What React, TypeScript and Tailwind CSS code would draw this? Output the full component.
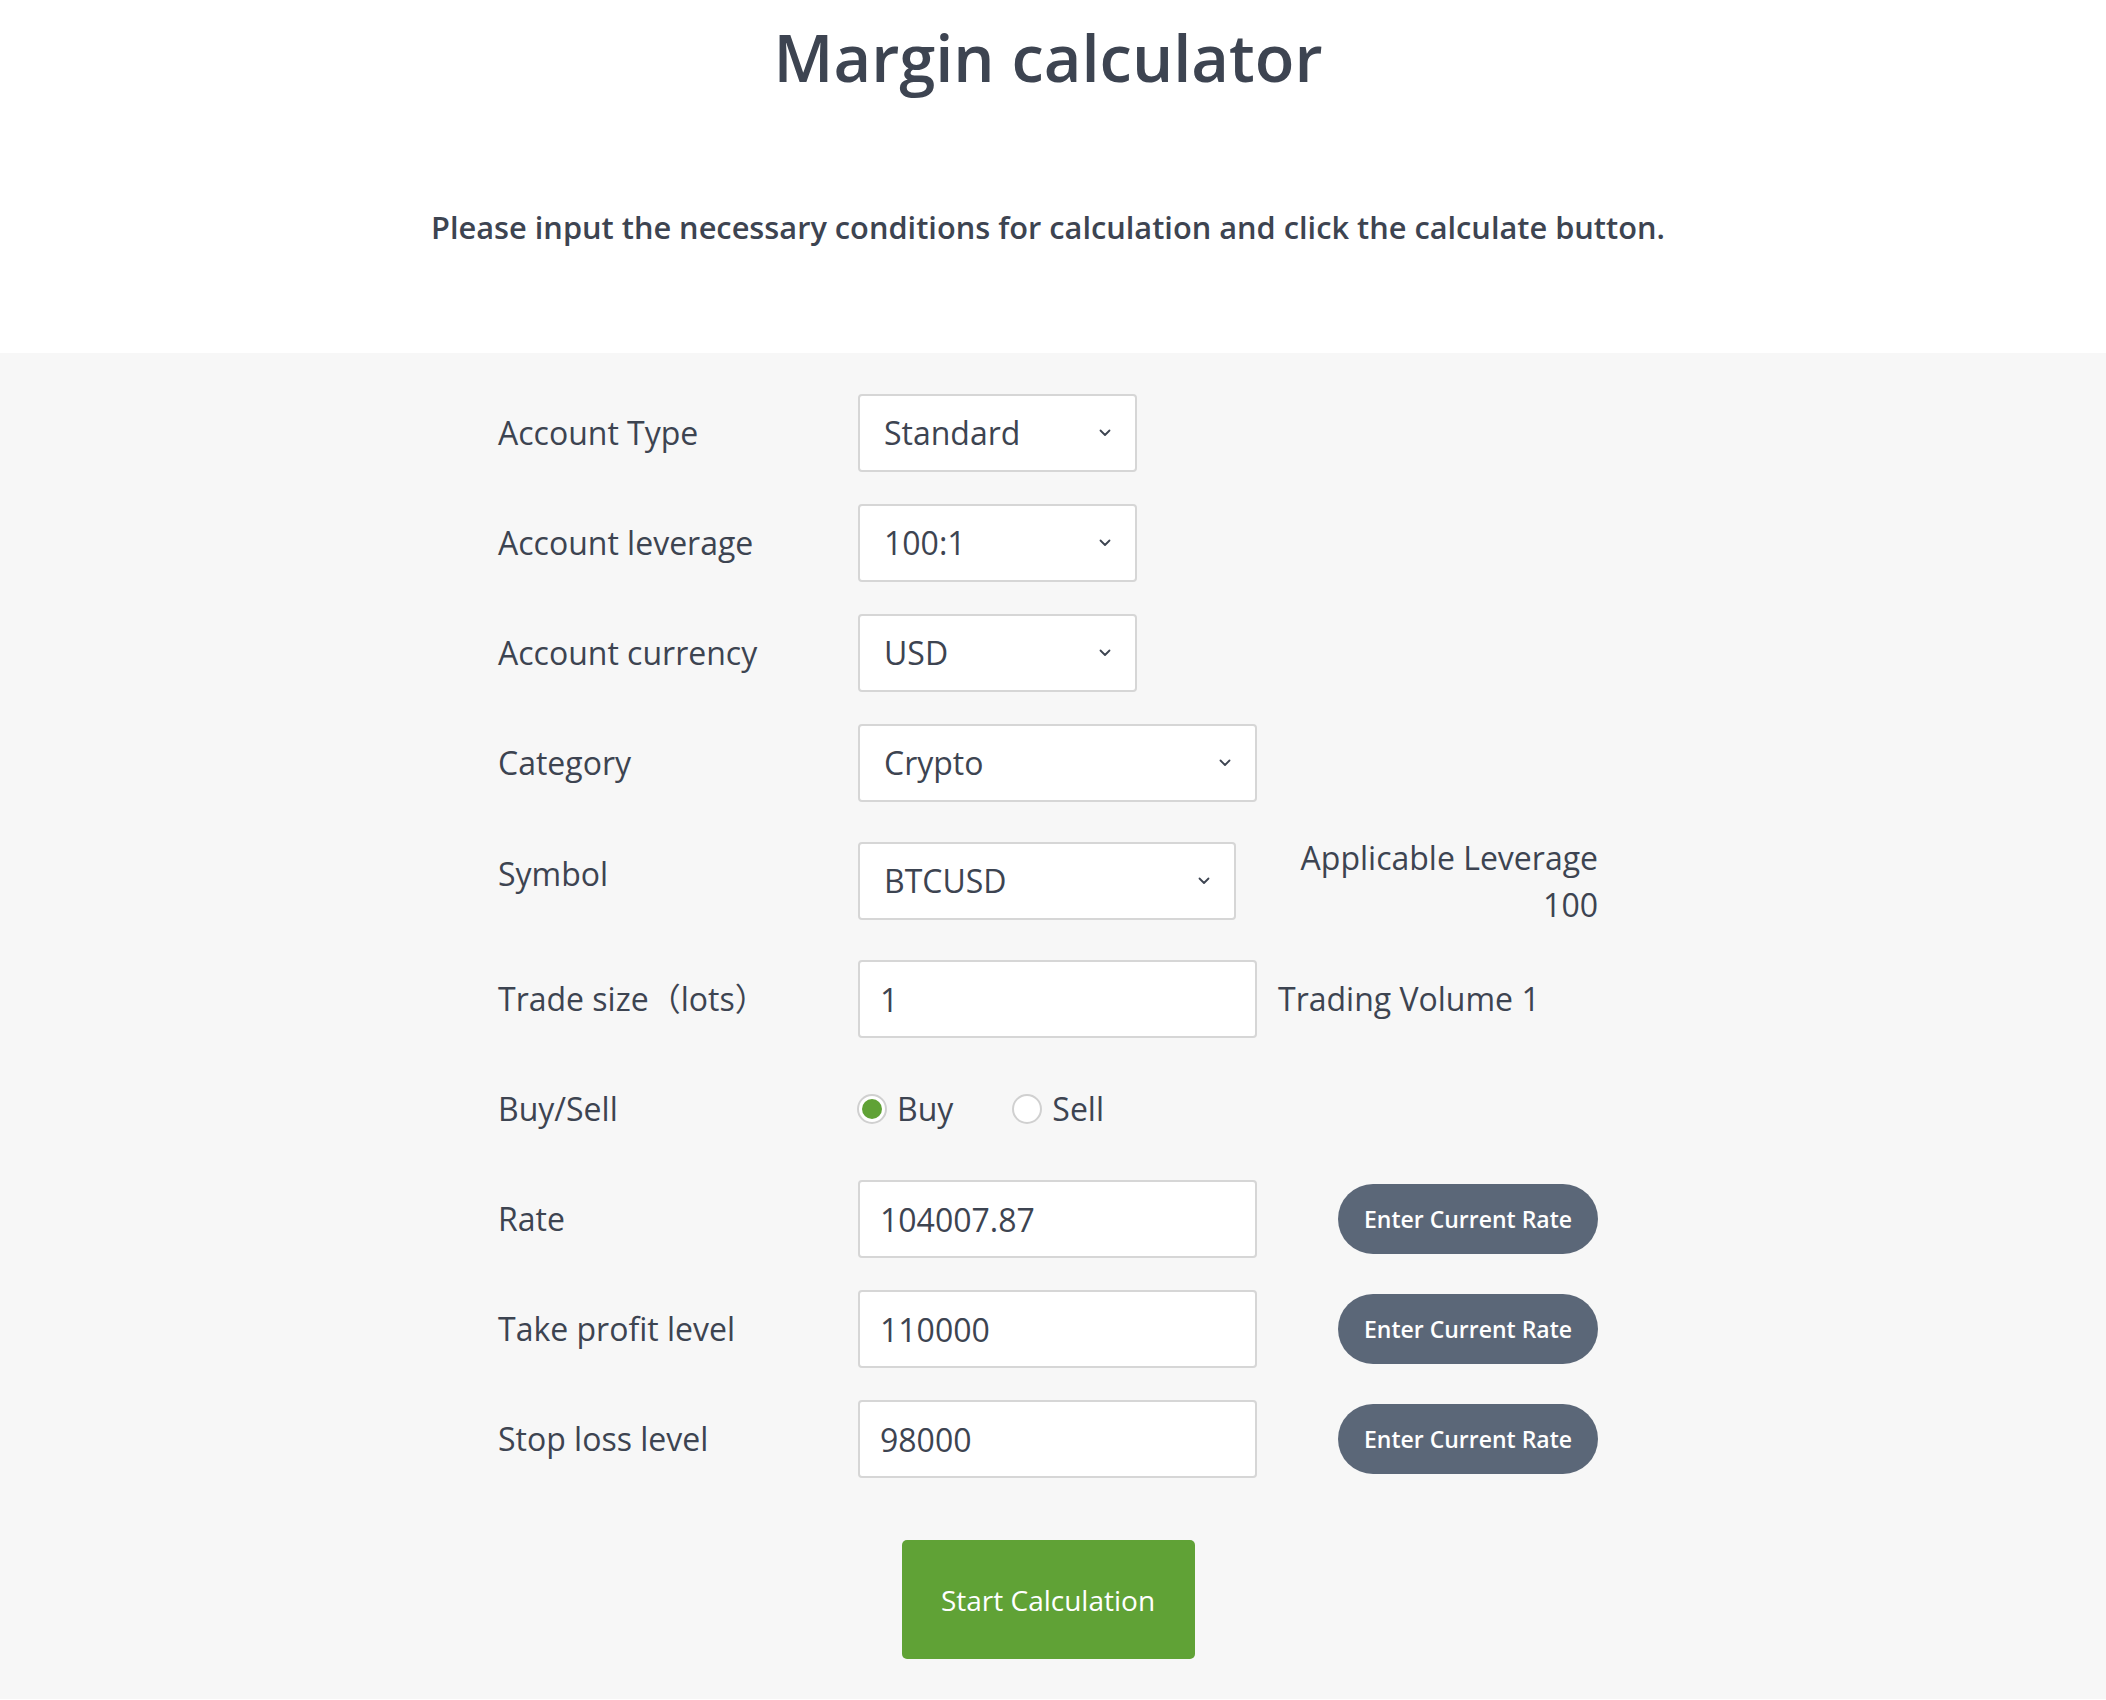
import type { ReactNode } from "react";

const FONT = "font-['Open_Sans','Noto_Sans_CJK_JP',sans-serif]";

function Chevron() {
    return (
        <svg width="12" height="8" viewBox="0 0 12 8" fill="none" className="shrink-0">
            <path d="M1.5 1.5L6 6L10.5 1.5" stroke="#3d4451" strokeWidth="1.8" strokeLinecap="round" strokeLinejoin="round" />
        </svg>
    );
}

function SelectBox({ value, width }: { value: string; width: string }) {
    return (
        <div
            className={`flex h-[78px] ${width} shrink-0 items-center justify-between rounded-[4px] border-2 border-[#d6d6d6] bg-white pl-[24px] pr-[24px]`}
        >
            <span>{value}</span>
            <Chevron />
        </div>
    );
}

function TextBox({ value }: { value: string }) {
    return (
        <input
            type="text"
            defaultValue={value}
            className="h-[78px] w-[399px] shrink-0 rounded-[4px] border-2 border-[#d6d6d6] bg-white pl-[20px] text-[#3d4451] outline-none"
        />
    );
}

function RateButton() {
    return (
        <div className="flex flex-1 justify-end">
            <button
                type="button"
                className="h-[70px] w-[260px] rounded-full bg-[#5b6778] text-[23px] font-semibold text-white"
            >
                Enter Current Rate
            </button>
        </div>
    );
}

function Row({ label, children, labelClass = "" }: { label: string; children: ReactNode; labelClass?: string }) {
    return (
        <div className="flex min-h-[78px] items-center">
            <div className={`w-[360px] shrink-0 ${labelClass}`}>{label}</div>
            {children}
        </div>
    );
}

function Radio({ label, checked }: { label: string; checked?: boolean }) {
    return (
        <label className="flex items-center gap-[10px]">
            <span className="flex h-[30px] w-[30px] items-center justify-center rounded-full border-2 border-[#d0d0d0] bg-white">
                {checked && <span className="h-[20px] w-[20px] rounded-full bg-[#60a236]" />}
            </span>
            <span>{label}</span>
        </label>
    );
}

export default function App() {
    return (
        <div className={`min-h-[1700px] bg-white text-[#3d4451] ${FONT}`}>
            <header className="pr-[10px] pt-[25px] pb-[106px] text-center">
                <h1 className="text-[65px] font-semibold leading-none">Margin calculator</h1>
                <p className="mt-[117px] text-[30.75px] font-semibold leading-[40px]">
                    Please input the necessary conditions for calculation and click the calculate button.
                </p>
            </header>

            <section className="min-h-[1346px] bg-[#f7f7f7] pr-[10px] pt-[41px]">
                <div className="mx-auto w-[1100px] text-[32px]">
                    <div className="flex flex-col gap-[32px]">
                        <Row label="Account Type">
                            <SelectBox value="Standard" width="w-[279px]" />
                        </Row>
                        <Row label="Account leverage">
                            <SelectBox value="100:1" width="w-[279px]" />
                        </Row>
                        <Row label="Account currency">
                            <SelectBox value="USD" width="w-[279px]" />
                        </Row>
                        <Row label="Category">
                            <SelectBox value="Crypto" width="w-[399px]" />
                        </Row>
                        <Row label="Symbol" labelClass="pb-[14px]">
                            <SelectBox value="BTCUSD" width="w-[378px]" />
                            <div className="flex-1 text-right leading-[47px]">
                                <div>Applicable Leverage</div>
                                <div>100</div>
                            </div>
                        </Row>
                        <Row label="Trade size（lots）">
                            <TextBox value="1" />
                            <span className="ml-[21px]">Trading Volume 1</span>
                        </Row>
                        <Row label="Buy/Sell">
                            <div className="-ml-px flex items-center gap-[59px]">
                                <Radio label="Buy" checked />
                                <Radio label="Sell" />
                            </div>
                        </Row>
                        <Row label="Rate">
                            <TextBox value="104007.87" />
                            <RateButton />
                        </Row>
                        <Row label="Take profit level">
                            <TextBox value="110000" />
                            <RateButton />
                        </Row>
                        <Row label="Stop loss level">
                            <TextBox value="98000" />
                            <RateButton />
                        </Row>
                    </div>

                    <div className="mt-[62px] flex justify-center">
                        <button
                            type="button"
                            className="h-[119px] w-[293px] rounded-[5px] bg-[#60a236] text-[28px] font-medium text-white"
                        >
                            Start Calculation
                        </button>
                    </div>
                </div>
            </section>
        </div>
    );
}
